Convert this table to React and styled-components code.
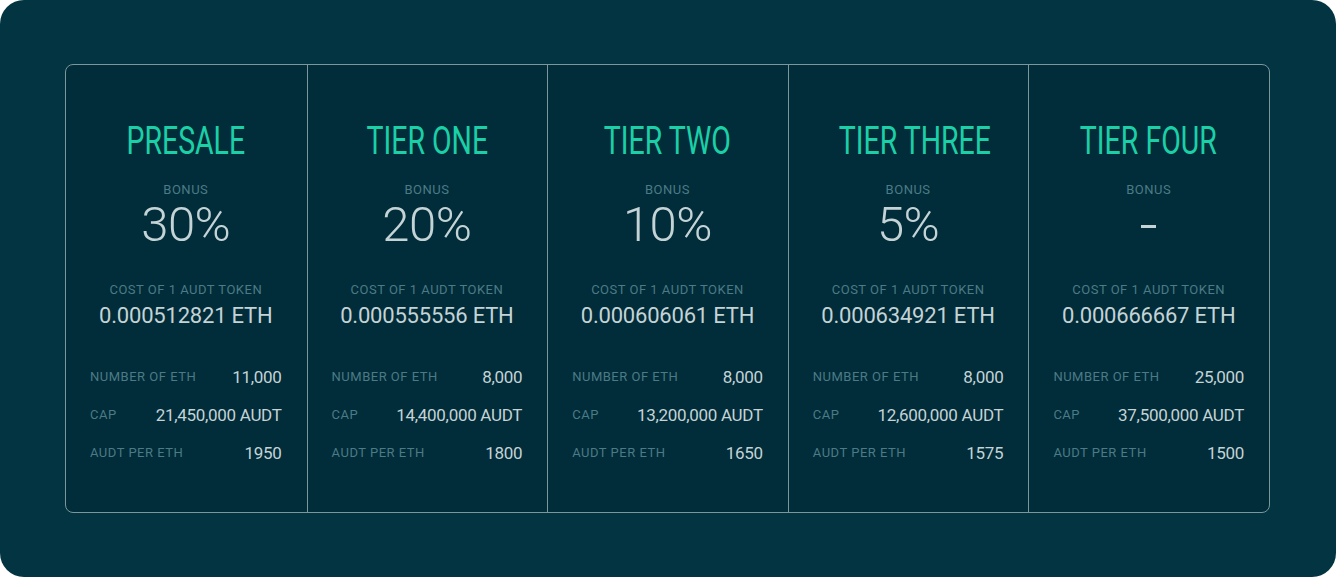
import React from "react";
import styled, { createGlobalStyle } from "styled-components";

const Global = createGlobalStyle`
  html, body { margin: 0; padding: 0; background: #ffffff; }
  body { font-family: Roboto, "Liberation Sans", sans-serif; }
`;

const Page = styled.div`
  width: 1336px;
  height: 577px;
  box-sizing: border-box;
  background: #023541;
  border-radius: 24px;
  padding: 64px 66px 64px 65px;
`;

const Table = styled.div`
  display: grid;
  grid-template-columns: repeat(5, minmax(0, 1fr));
  height: 449px;
  box-sizing: border-box;
  border: 1px solid #7b979c;
  border-radius: 8px;
  background: #012c39;
  overflow: hidden;
`;

const Column = styled.div`
  display: flex;
  flex-direction: column;
  align-items: stretch;
  padding: 57px 25px 0 24px;
  border-left: ${(p) => (p.$first ? "none" : "1px solid #7b979c")};
  text-align: center;
  min-width: 0;
`;

const Title = styled.div`
  font-size: 39px;
  line-height: 39px;
  height: 39px;
  color: #1bd0a7;
  font-weight: 400;
  white-space: nowrap;
  transform: scaleX(0.73);
`;

const Label = styled.div`
  font-size: 13px;
  line-height: 14px;
  color: #4b7b86;
  letter-spacing: 0.5px;
  white-space: nowrap;
`;

const BonusLabel = styled(Label)`
  margin-top: 22px;
`;

const CostLabel = styled(Label)`
  margin-top: 34px;
`;

const Bonus = styled.div`
  margin-top: 3px;
  font-size: 49px;
  line-height: 49px;
  height: 49px;
  font-weight: 300;
  color: #c4d3d6;
  letter-spacing: -0.5px;
`;

const Cost = styled.div`
  margin-top: 8px;
  font-size: 22px;
  line-height: 22px;
  color: #c4d3d6;
  letter-spacing: -0.2px;
  white-space: nowrap;
`;

const Rows = styled.div`
  margin-top: 31px;
  display: flex;
  flex-direction: column;
`;

const Row = styled.div`
  display: flex;
  align-items: center;
  justify-content: space-between;
  height: 38px;
`;

const RowLabel = styled(Label)`
  text-align: left;
`;

const RowValue = styled.div`
  font-size: 17px;
  line-height: 17px;
  color: #c4d3d6;
  letter-spacing: -0.3px;
  white-space: nowrap;
`;

const Dash = styled.span`
  display: inline-block;
  width: 15px;
  height: 3px;
  background: #c4d3d6;
  vertical-align: middle;
  position: relative;
  top: -2px;
`;

const tiers = [
  { name: "PRESALE", bonus: "30%", cost: "0.000512821 ETH", eth: "11,000", cap: "21,450,000 AUDT", per: "1950" },
  { name: "TIER ONE", bonus: "20%", cost: "0.000555556 ETH", eth: "8,000", cap: "14,400,000 AUDT", per: "1800" },
  { name: "TIER TWO", bonus: "10%", cost: "0.000606061 ETH", eth: "8,000", cap: "13,200,000 AUDT", per: "1650" },
  { name: "TIER THREE", bonus: "5%", cost: "0.000634921 ETH", eth: "8,000", cap: "12,600,000 AUDT", per: "1575" },
  { name: "TIER FOUR", bonus: null, cost: "0.000666667 ETH", eth: "25,000", cap: "37,500,000 AUDT", per: "1500" },
];

export default function App() {
  return (
    <>
      <Global />
      <Page>
        <Table>
          {tiers.map((t, i) => (
            <Column key={t.name} $first={i === 0}>
              <Title>{t.name}</Title>
              <BonusLabel>BONUS</BonusLabel>
              <Bonus>{t.bonus ? t.bonus : <Dash />}</Bonus>
              <CostLabel>COST OF 1 AUDT TOKEN</CostLabel>
              <Cost>{t.cost}</Cost>
              <Rows>
                <Row>
                  <RowLabel>NUMBER OF ETH</RowLabel>
                  <RowValue>{t.eth}</RowValue>
                </Row>
                <Row>
                  <RowLabel>CAP</RowLabel>
                  <RowValue>{t.cap}</RowValue>
                </Row>
                <Row>
                  <RowLabel>AUDT PER ETH</RowLabel>
                  <RowValue>{t.per}</RowValue>
                </Row>
              </Rows>
            </Column>
          ))}
        </Table>
      </Page>
    </>
  );
}
